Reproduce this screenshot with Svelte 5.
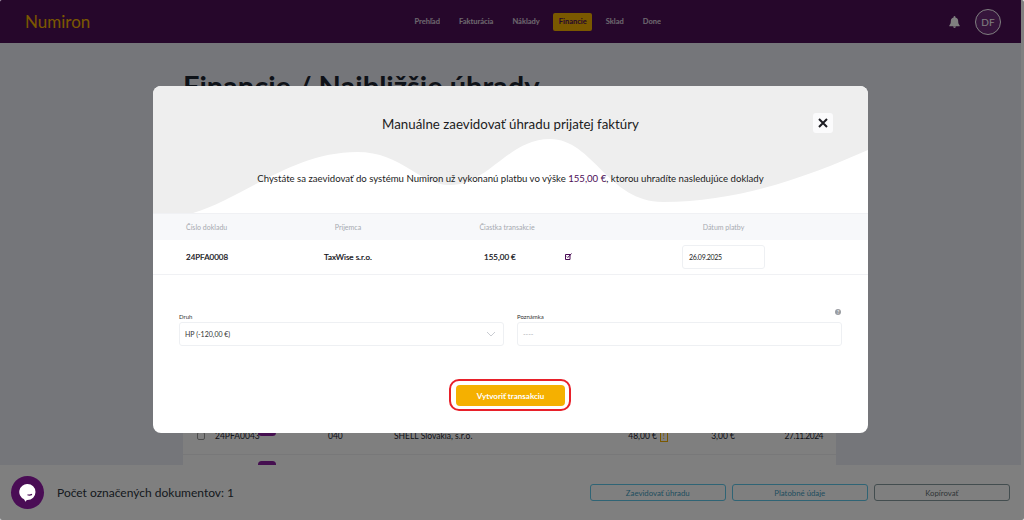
<script>
  const navItems = ["Prehľad", "Fakturácia", "Náklady", "Financie", "Sklad", "Done"];
</script>

<div class="window">
  <div class="page">
    <header class="topbar">
      <span class="logo">Numiron</span>
      <nav class="nav">
        {#each navItems as item}
          <span class="nav-item" class:active={item === "Financie"}>{item}</span>
        {/each}
      </nav>
      <div class="user">
        <svg class="bell" width="11" height="12" viewBox="0 0 12 13">
          <path fill="#fff" d="M6 0a1 1 0 0 1 1 1v.6A4 4 0 0 1 10 5.500c0 2.600.6 3.700 1.600 4.700.3.300.1.800-.3.800H.7c-.4 0-.6-.5-.3-.8C1.400 9.200 2 8.100 2 5.500a4 4 0 0 1 3-3.900V1a1 1 0 0 1 1-1zM4.500 11.500h3a1.500 1.500 0 0 1-3 0z" />
        </svg>
        <span class="avatar">DF</span>
      </div>
    </header>

    <main class="content">
      <h1>Financie / Najbližšie úhrady</h1>
      <div class="table-card">
        <div class="bg-row">
          <span class="box"></span>
          <span class="doc">24PFA0043<span class="tag"></span></span>
          <span class="code">040</span>
          <span class="partner">SHELL Slovakia, s.r.o.</span>
          <span class="amount">48,00 €<span class="warn">!</span></span>
          <span class="fee">3,00 €</span>
          <span class="date">27.11.2024</span>
        </div>
        <div class="bg-row next">
          <span class="box hidden"></span>
          <span class="doc"><span class="tag second"></span></span>
        </div>
      </div>
    </main>

    <footer class="selection-bar">
      <span class="count">Počet označených dokumentov: 1</span>
      <div class="actions">
        <button class="outline">Zaevidovať úhradu</button>
        <button class="outline">Platobné údaje</button>
        <button class="outline gray">Kopírovať</button>
      </div>
    </footer>

    <div class="overlay">
      <section class="modal">
        <div class="hero">
          <svg class="wave" viewBox="0 0 715 127" preserveAspectRatio="none">
            <path fill="#eeeeee" d="M0 0H715V64C660 88 590 116 510 116C455 116 440 53 397 53C355 53 335 99 297 99C265 99 250 66 204 66C140 66 90 112 40 127H0Z" />
          </svg>
          <h2>Manuálne zaevidovať úhradu prijatej faktúry</h2>
          <button class="close" aria-label="Zavrieť">
            <svg width="10" height="10" viewBox="0 0 10 10">
              <path d="M1 1l8 8M9 1l-8 8" stroke="#1c1c22" stroke-width="2" />
            </svg>
          </button>
          <p class="lead">Chystáte sa zaevidovať do systému Numiron už vykonanú platbu vo výške <span class="sum">155,00 €</span>, ktorou uhradíte nasledujúce doklady</p>
        </div>

        <div class="grid-head">
          <span>Číslo dokladu</span>
          <span class="center">Príjemca</span>
          <span class="center">Čiastka transakcie</span>
          <span class="center">Dátum platby</span>
        </div>
        <div class="grid-row">
          <span class="strong">24PFA0008</span>
          <span class="center strong">TaxWise s.r.o.</span>
          <span class="amount-cell">
            <span class="strong">155,00 €</span>
            <svg class="edit" width="7" height="7" viewBox="0 0 7 7">
              <path d="M.5 1.500h4.500v5H.5z" fill="none" stroke="#4a0d55" />
              <path d="M1.800 3.500l1 1L6.500.5" fill="none" stroke="#4a0d55" />
            </svg>
          </span>
          <span class="date-input">26.09.2025</span>
        </div>

        <div class="form">
          <div class="field">
            <span class="field-label">Druh</span>
            <span class="control">
              HP (-120,00 €)
              <svg width="10" height="6" viewBox="0 0 10 6"><path d="M1 1l4 4 4-4" fill="none" stroke="#c9ccd2" /></svg>
            </span>
          </div>
          <div class="field">
            <span class="field-label">Poznámka</span>
            <span class="control muted">----</span>
            <span class="help">?</span>
          </div>
        </div>

        <div class="submit-wrap">
          <button class="submit">Vytvoriť transakciu</button>
          <span class="mark"></span>
        </div>
      </section>
    </div>

    <button class="chat" aria-label="Chat">
      <svg width="17" height="18" viewBox="0 0 17 18">
        <path fill="#fff" d="M8.500 0a8 8 0 0 1 0 16l-.7 0L6.500 17.800 5 15.300A8 8 0 0 1 8.500 0z" />
        <path d="M8.500 10.800c1.400.5 3 .4 4.500-.4" fill="none" stroke="#4a0d55" stroke-width="1.200" />
      </svg>
    </button>
  </div>
</div>

<style>
  :global(body) {
    margin: 0;
    font-family: Lato, "Noto Sans", sans-serif;
  }

  .window {
    width: 1024px;
    height: 520px;
    background: #808080;
    border-radius: 2px;
    overflow: hidden;
  }

  .page {
    position: relative;
    width: 1021px;
    height: 520px;
    overflow: hidden;
    background: #eaecf4;
    display: flex;
    flex-direction: column;
    color: #1c2430;
  }

  .topbar {
    height: 43px;
    flex-shrink: 0;
    background: #4c0e57;
    display: flex;
    align-items: center;
    padding: 0 20px 0 25px;
    box-sizing: border-box;
  }

  .logo {
    width: 384px;
    font-size: 17px;
    color: #f5b000;
  }

  .nav {
    display: flex;
    gap: 8px;
    align-items: center;
  }

  .nav-item {
    padding: 0 5.500px;
    line-height: 18px;
    font-size: 7.500px;
    font-weight: 700;
    color: #fff;
    opacity: 0.8;
    border-radius: 2px;
  }

  .nav-item.active {
    background: #f5b000;
    color: #4c0e57;
    opacity: 1;
  }

  .user {
    margin-left: auto;
    display: flex;
    align-items: center;
    gap: 15px;
  }

  .avatar {
    width: 24px;
    height: 24px;
    border-radius: 50%;
    border: 1px solid #fff;
    background: #6d2a78;
    color: #fff;
    font-size: 10px;
    display: grid;
    place-items: center;
  }

  .content {
    flex: 1;
    min-height: 0;
    padding: 28px 185px 0 183px;
    overflow: hidden;
  }

  h1 {
    margin: 0;
    font-size: 29px;
    line-height: 30px;
    font-weight: 700;
    white-space: nowrap;
    color: #1c2430;
  }

  .table-card {
    margin-top: 317px;
    background: #fff;
    height: 60px;
  }

  .bg-row {
    height: 37px;
    box-sizing: border-box;
    border-bottom: 1px solid #f0f0f3;
    display: flex;
    align-items: center;
    padding-left: 14px;
    font-size: 8.500px;
  }

  .bg-row.next {
    align-items: flex-start;
    border-bottom: 0;
  }

  .box {
    width: 8px;
    height: 8px;
    box-sizing: border-box;
    border: 1px solid #999;
    border-radius: 2px;
    margin-right: 10px;
  }

  .hidden {
    visibility: hidden;
  }

  .doc {
    width: 113px;
    position: relative;
  }

  .tag {
    position: absolute;
    left: 43px;
    top: -2px;
    width: 18px;
    height: 7px;
    border-radius: 4px;
    background: #8a1fa0;
  }

  .tag.second {
    top: 6px;
  }

  .code {
    width: 66px;
  }

  .partner {
    width: 190px;
  }

  .amount {
    width: 73px;
    text-align: right;
    position: relative;
  }

  .warn {
    position: absolute;
    left: 76px;
    top: 0;
    width: 6px;
    border: 1px solid #f5b000;
    text-align: center;
    color: #f5b000;
    line-height: 9px;
  }

  .fee {
    width: 78px;
    text-align: right;
  }

  .date {
    width: 88px;
    text-align: right;
    letter-spacing: -0.5px;
  }

  .selection-bar {
    height: 55px;
    flex-shrink: 0;
    background: #fff;
    display: flex;
    align-items: center;
    padding: 0 11px 0 57px;
  }

  .count {
    font-size: 12px;
    color: #2c3440;
  }

  .actions {
    margin-left: auto;
    display: flex;
    gap: 5.500px;
  }

  .outline {
    width: 136.500px;
    height: 17px;
    padding: 0;
    background: transparent;
    border: 1px solid #5fc8ea;
    border-radius: 3px;
    color: #3f9cc0;
    font: 400 7.800px Lato, sans-serif;
  }

  .outline.gray {
    border-color: #869a9e;
    color: #5f6d70;
  }

  .overlay {
    position: absolute;
    inset: 0;
    background: rgba(0, 0, 0, 0.5);
    display: flex;
    justify-content: center;
    align-items: flex-start;
    padding: 86px 0 0 0;
    box-sizing: border-box;
  }

  .modal {
    width: 715px;
    height: 347px;
    background: #fff;
    border-radius: 8px;
    overflow: hidden;
    display: flex;
    flex-direction: column;
  }

  .hero {
    position: relative;
    height: 127px;
    flex-shrink: 0;
    text-align: center;
  }

  .wave {
    position: absolute;
    inset: 0;
    width: 100%;
    height: 100%;
  }

  h2 {
    position: relative;
    margin: 0;
    padding-top: 29px;
    font-size: 13.300px;
    line-height: 19px;
    font-weight: 400;
    color: #1c1c22;
  }

  .close {
    position: absolute;
    top: 27px;
    right: 35px;
    width: 20px;
    height: 20px;
    padding: 0;
    border: 0;
    border-radius: 3px;
    background: #fbfbfc;
    display: grid;
    place-items: center;
  }

  .lead {
    position: relative;
    margin: 38px 0 0;
    font-size: 9.600px;
    line-height: 14px;
    color: #1c1c22;
  }

  .sum {
    color: #4c0e57;
  }

  .grid-head,
  .grid-row {
    display: grid;
    grid-template-columns: 100px 124px 194px 239px;
    padding-left: 33px;
    align-items: center;
  }

  .grid-head {
    height: 27px;
    box-sizing: border-box;
    background: #f7f8fa;
    border-top: 1px solid #f0f1f4;
    font-size: 7px;
    color: #a6a9b0;
  }

  .grid-row {
    height: 35px;
    box-sizing: border-box;
    padding-bottom: 1px;
    border-bottom: 1px solid #f0f1f4;
    font-size: 8px;
  }

  .center {
    text-align: center;
  }

  .strong {
    color: #111116;
    -webkit-text-stroke: 0.2px #111116;
  }

  .amount-cell {
    display: flex;
    align-items: center;
    padding-left: 74px;
  }

  .amount-cell .strong {
    width: 81px;
  }

  .date-input {
    justify-self: center;
    width: 83px;
    height: 24px;
    box-sizing: border-box;
    border: 1px solid #eef0f3;
    border-radius: 3px;
    padding-left: 6px;
    line-height: 22px;
    font-size: 7px;
    letter-spacing: -0.3px;
    color: #1c1c22;
  }

  .form {
    display: grid;
    grid-template-columns: 325px 325px;
    gap: 13px;
    padding: 38px 26px 0;
  }

  .field {
    position: relative;
    display: flex;
    flex-direction: column;
    gap: 1px;
  }

  .field-label {
    font-size: 6px;
    line-height: 8px;
    color: #333;
  }

  .control {
    height: 24px;
    box-sizing: border-box;
    border: 1px solid #eef0f3;
    border-radius: 3px;
    padding: 0 7px 0 5px;
    display: flex;
    align-items: center;
    justify-content: space-between;
    font-size: 7px;
    color: #333;
  }

  .muted {
    color: #b0b3b8;
  }

  .help {
    position: absolute;
    right: 1px;
    top: -4px;
    width: 6px;
    height: 6px;
    border-radius: 50%;
    background: #9a9da2;
    color: #fff;
    font-size: 5px;
    line-height: 6px;
    text-align: center;
  }

  .submit-wrap {
    position: relative;
    align-self: center;
    margin-top: 39px;
  }

  .submit {
    display: block;
    width: 109px;
    height: 21px;
    padding: 0;
    border: 0;
    border-radius: 4px;
    background: #f5b000;
    color: #fff;
    font: 700 8px Lato, sans-serif;
  }

  .mark {
    position: absolute;
    inset: -6px -6px -5px -7px;
    border: 2.500px solid #e8202a;
    border-radius: 10px;
  }

  .chat {
    position: absolute;
    left: 11px;
    top: 476px;
    width: 33px;
    height: 33px;
    padding: 0;
    border: 0;
    border-radius: 50%;
    background: #4a0d55;
    display: grid;
    place-items: center;
  }
</style>
